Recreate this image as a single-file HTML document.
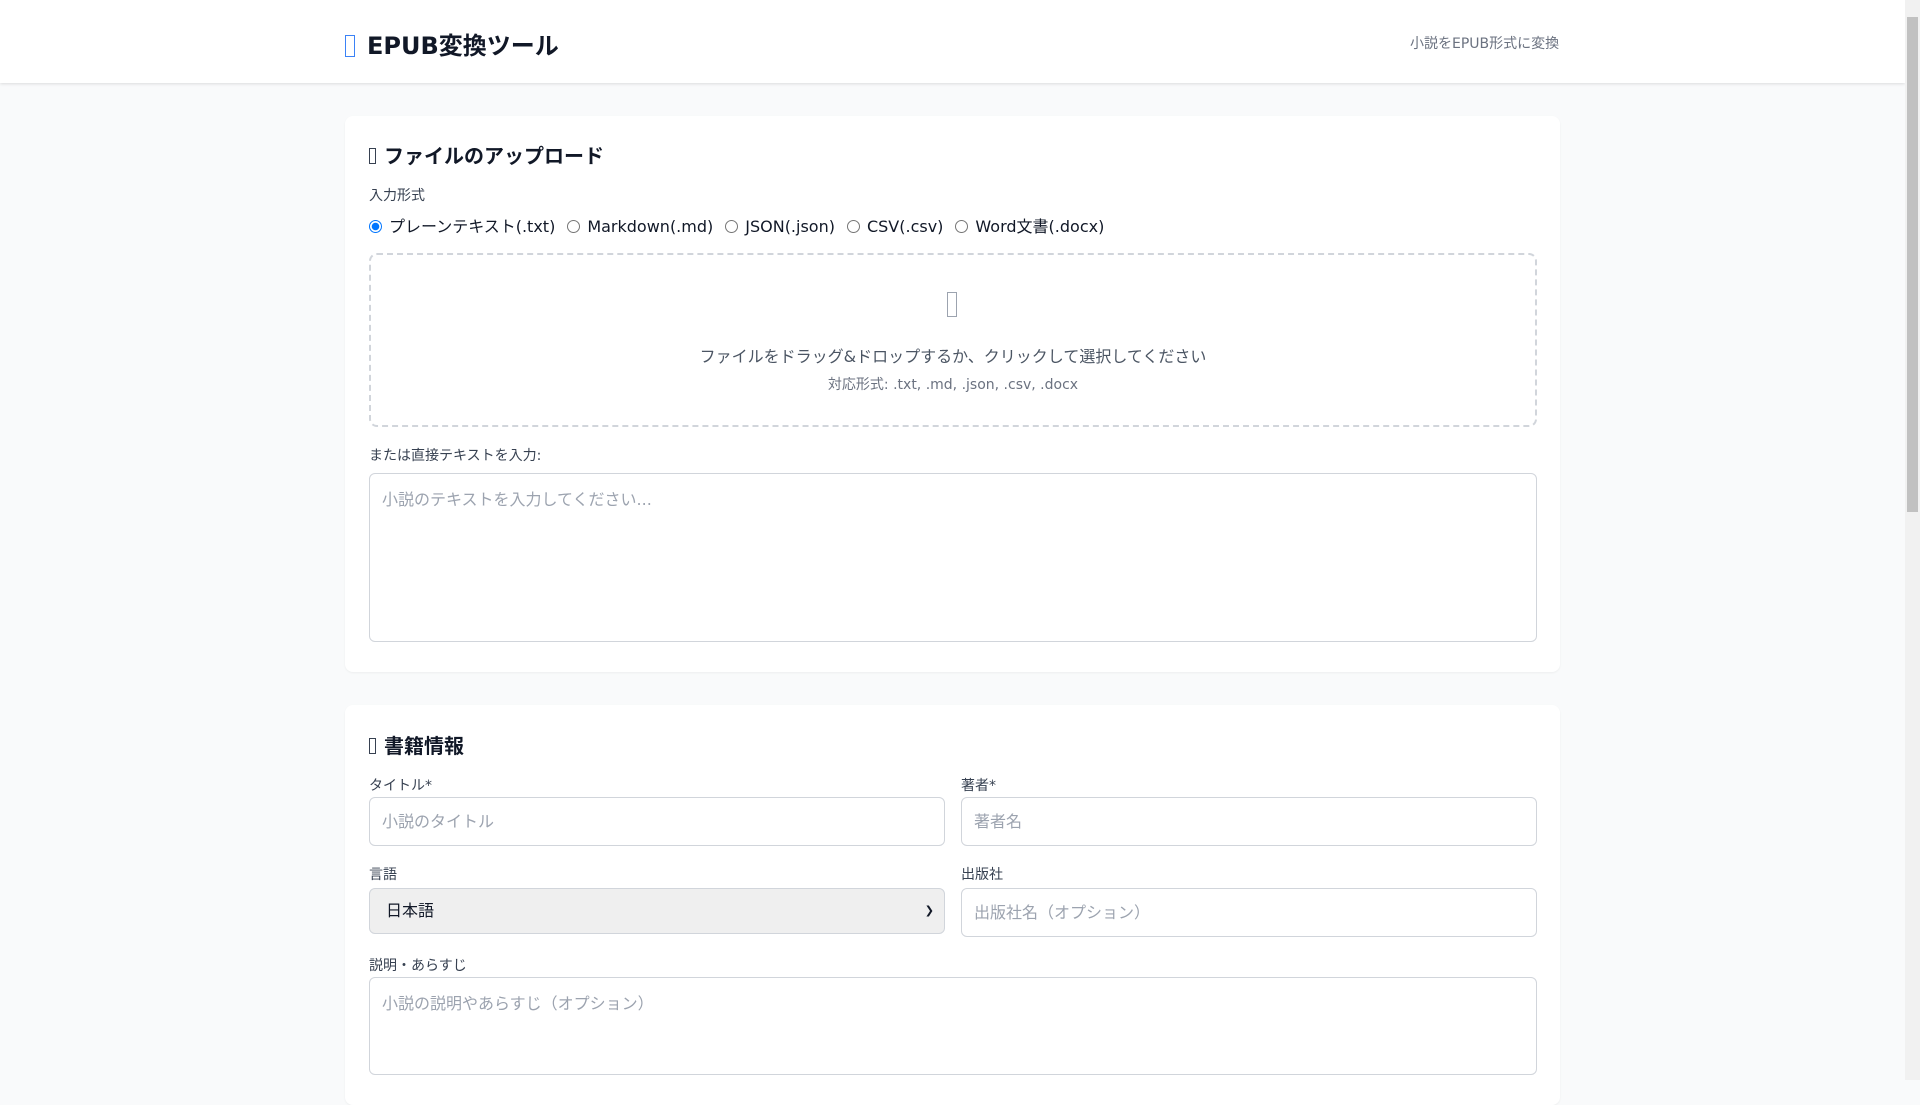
<!DOCTYPE html>
<html><head><meta charset="utf-8"><style>
*{box-sizing:border-box;margin:0;padding:0}
body{width:1920px;height:1080px;overflow:hidden;background:#f9fafb;font-family:"DejaVu Sans","Liberation Sans","Noto Sans CJK JP",sans-serif;color:#111827;position:relative}
.a{position:absolute;white-space:nowrap}
.hdr{position:absolute;left:0;top:0;width:1905px;height:83px;background:#fff;box-shadow:0 1px 3px rgba(0,0,0,.12)}
.sb{position:absolute;right:0;top:0;width:15px;height:1080px;background:#f1f1f1}
.sb div{position:absolute;left:2px;top:17px;width:11px;height:495px;background:#c1c1c1}
.card{position:absolute;left:345px;width:1215px;background:#fff;border-radius:8px;box-shadow:0 1px 2px rgba(0,0,0,.05)}
.lbl{font-size:14px;color:#374151}
.tofu{display:inline-block;border:1.5px solid currentColor;width:9px;height:18px}
.inp{position:absolute;border:1px solid #d1d5db;border-radius:6px;background:#fff;font-size:16px;color:#9ca3af;padding:0 12px}
.radio{display:inline-block;width:13px;height:13px;border:1px solid #767676;border-radius:50%;vertical-align:-1px;margin-right:7px;background:#fff}
.radio.on{border:1px solid #0075ff;background:radial-gradient(circle,#0075ff 3.5px,#fff 4px)}
</style></head><body>
<div class="hdr"></div>
<div class="sb"><div></div></div>
<div class="a" style="left:345px;top:26px;font-size:24px;font-weight:bold;color:#111827"><span class="tofu" style="color:#3b82f6;width:10px;height:22px;vertical-align:-3px;margin-right:12px"></span>EPUB変換ツール</div>
<div class="a" style="left:1410px;top:33px;font-size:14px;color:#6b7280">小説をEPUB形式に変換</div>

<div class="card" style="top:116px;height:556px"></div>
<div class="a" style="left:369px;top:140px;font-size:20px;font-weight:bold"><span class="tofu" style="width:7px;height:16px;vertical-align:-1px;margin-right:8px;border-width:1px;color:#374151"></span>ファイルのアップロード</div>
<div class="a lbl" style="left:369px;top:185px">入力形式</div>
<div class="a" style="left:369px;top:213px;font-size:16px;color:#111827">
<span class="radio on"></span>プレーンテキスト(.txt)<span style="display:inline-block;width:12px"></span><span class="radio"></span>Markdown(.md)<span style="display:inline-block;width:12px"></span><span class="radio"></span>JSON(.json)<span style="display:inline-block;width:12px"></span><span class="radio"></span>CSV(.csv)<span style="display:inline-block;width:12px"></span><span class="radio"></span>Word文書(.docx)</div>
<div class="a" style="left:369px;top:253px;width:1168px;height:174px;border:2px dashed #d1d5db;border-radius:8px"></div>
<div class="a" style="left:947px;top:292px"><span class="tofu" style="color:#9ca3af;width:10px;height:25px"></span></div>
<div class="a" style="left:369px;width:1168px;text-align:center;top:343px;font-size:16px;color:#4b5563">ファイルをドラッグ&amp;ドロップするか、クリックして選択してください</div>
<div class="a" style="left:369px;width:1168px;text-align:center;top:374px;font-size:14px;color:#6b7280">対応形式: .txt, .md, .json, .csv, .docx</div>
<div class="a lbl" style="left:369px;top:445px">または直接テキストを入力:</div>
<div class="inp" style="left:369px;top:473px;width:1168px;height:169px;padding-top:12px">小説のテキストを入力してください...</div>

<div class="card" style="top:705px;height:400px"></div>
<div class="a" style="left:369px;top:730px;font-size:20px;font-weight:bold"><span class="tofu" style="width:7px;height:16px;vertical-align:-1px;margin-right:8px;border-width:1px;color:#374151"></span>書籍情報</div>
<div class="a lbl" style="left:369px;top:775px">タイトル*</div>
<div class="a lbl" style="left:961px;top:775px">著者*</div>
<div class="inp" style="left:369px;top:797px;width:576px;height:49px;line-height:47px">小説のタイトル</div>
<div class="inp" style="left:961px;top:797px;width:576px;height:49px;line-height:47px">著者名</div>
<div class="a lbl" style="left:369px;top:864px">言語</div>
<div class="a lbl" style="left:961px;top:864px">出版社</div>
<div class="inp" style="left:369px;top:888px;width:576px;height:46px;line-height:44px;background:#efefef;color:#111827;padding-left:16px">日本語<span style="position:absolute;right:10px;top:0;font-size:11px">&#10095;</span></div>
<div class="inp" style="left:961px;top:888px;width:576px;height:49px;line-height:47px">出版社名（オプション）</div>
<div class="a lbl" style="left:369px;top:955px">説明・あらすじ</div>
<div class="inp" style="left:369px;top:977px;width:1168px;height:98px;padding-top:12px">小説の説明やあらすじ（オプション）</div>
</body></html>
